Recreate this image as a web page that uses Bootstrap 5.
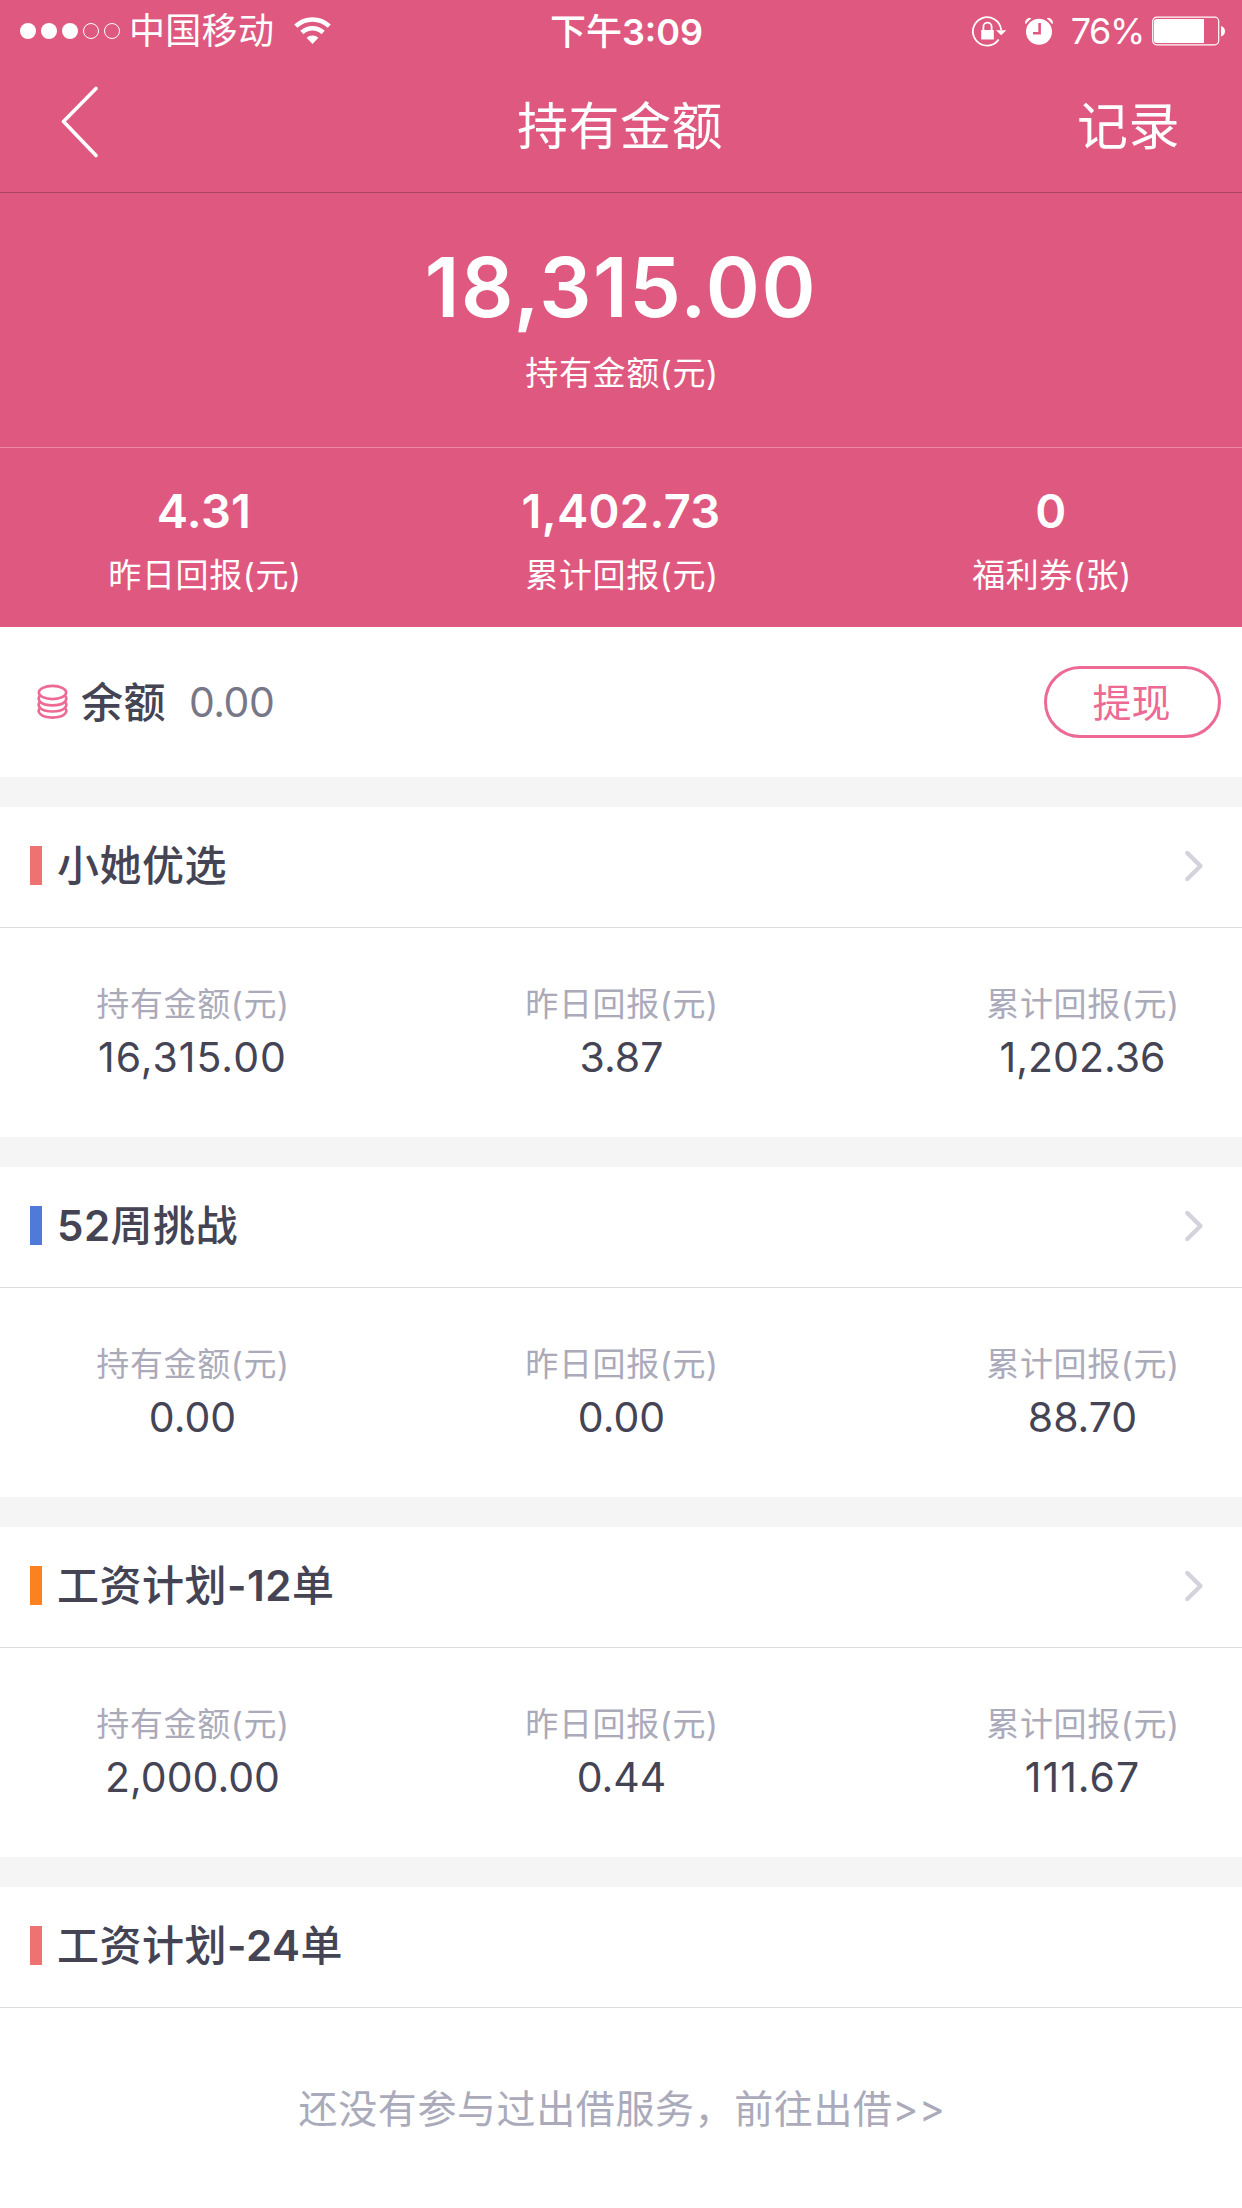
<!DOCTYPE html>
<html lang="zh-CN">
<head>
<meta charset="utf-8">
<meta name="viewport" content="width=device-width, initial-scale=1">
<title>持有金额</title>
<link href="https://cdn.jsdelivr.net/npm/bootstrap@5.3.0/dist/css/bootstrap.min.css" rel="stylesheet">
<style>
  :root { --pink: #df5880; --pink-line: #ec6a93; --ink: #444455; --muted: #aaaabb; }
  body { font-family: Inter, "Noto Sans CJK SC", sans-serif; color: var(--ink); background: #fff; font-size: 33px; line-height: 1; overflow-x: hidden; }
  svg { display: block; flex: none; }
  .top-area { background: var(--pink); color: #fff; height: 627px; }
  .status-bar { height: 60px; font-size: 36px; padding: 1px 16px 0 20px; }
  .status-side { flex: 1 1 0; }
  .status-side span { padding-top: 1px; }
  .carrier { margin-left: 8px; letter-spacing: .3px; }
  .wifi-icon { margin-left: 20px; }
  .clock { font-weight: 500; padding: 2px 0 0 7px; }
  .percent { letter-spacing: -1.4px; }
  .title-bar { height: 133px; font-size: 51px; padding: 0 62px 0 60px; border-bottom: 1px solid #a94567; }
  .title-side { flex: 1 1 0; }
  .title-side svg { margin-bottom: 8px; }
  .title-bar span { letter-spacing: .5px; padding-top: 1px; }
  .hero { height: 255px; padding-top: 50px; border-bottom: 1px solid #ea88a6; }
  .hero-sum { font-size: 82px; font-weight: 600; line-height: 90px; letter-spacing: 1.6px; }
  .cap-text { line-height: 46px; letter-spacing: .6px; padding-left: 2px; }
  .hero .cap-text { margin-top: 17px; }
  .stats { padding-top: 35px; }
  .stat-first { width: 408px; }
  .stat-last { width: 408px; padding-left: 26px; }
  .stat-num { font-size: 47px; font-weight: 600; line-height: 56px; letter-spacing: .3px; }
  .stats .cap-text { margin-top: 13px; }
  .balance { height: 150px; padding: 0 21px 0 37px; }
  .heading { font-size: 42px; font-weight: 500; letter-spacing: .5px; }
  .balance .heading { margin-left: 12px; padding-top: 2px; }
  .balance-num { font-size: 41px; letter-spacing: -.5px; color: #777788; margin-left: 23px; padding-top: 1px; }
  .withdraw { width: 177px; height: 72px; border: 3px solid var(--pink-line); color: var(--pink-line); font-size: 39px; line-height: 1; padding: 0 2px 0 0; }
  .plan { height: 360px; border-top: 30px solid #f5f5f5; }
  .plan-head { height: 121px; padding: 0 38px 3px 30px; border-bottom: 1px solid #dcdcdc; }
  .tick { width: 12px; height: 39px; margin-right: 15px; }
  .tick-red { background: #ee7272; }
  .tick-blue { background: #4f7ada; }
  .tick-orange { background: #fb821e; }
  .figures { padding-top: 53px; }
  .figures .cap-text { color: var(--muted); }
  .fig-first { width: 384px; }
  .fig-last { width: 384px; padding-left: 64px; }
  .fig-num { font-size: 41px; line-height: 50px; margin-top: 5px; padding-left: 1px; }
  .fig-spread { letter-spacing: 1px; }
  .empty-note { font-size: 39px; line-height: 50px; letter-spacing: .6px; color: var(--muted); padding: 76px 0 0 2px; }
</style>
</head>
<body>
<header class="top-area">
  <div class="status-bar d-flex align-items-center">
    <div class="status-side d-flex align-items-center">
      <svg width="101" height="18" viewBox="0 0 101 18"><g fill="#fff"><circle cx="8" cy="9" r="8"/><circle cx="29" cy="9" r="8"/><circle cx="50" cy="9" r="8"/></g><g fill="none" stroke="#fff" stroke-width="1"><circle cx="71" cy="9" r="7.5"/><circle cx="92" cy="9" r="7.5"/></g></svg>
      <span class="carrier">中国移动</span>
      <svg class="wifi-icon" width="37" height="28" viewBox="0 0 37 28"><g fill="none" stroke="#fff" stroke-width="4.6"><path d="M1.8 9.2a24 24 0 0 1 33.4 0"/><path d="M7.9 15.5a15.2 15.2 0 0 1 21.2 0"/></g><path d="M12.6 20.8a8.6 8.6 0 0 1 11.8 0L18.5 27z" fill="#fff"/></svg>
    </div>
    <div class="clock">下午<span class="fw-semibold">3:09</span></div>
    <div class="status-side d-flex align-items-center justify-content-end">
      <svg width="35" height="32" viewBox="0 0 35 32"><path d="M26.7 24.6A14.2 14.2 0 1 1 29.2 15" fill="none" stroke="#fff" stroke-width="1.8"/><path d="M24 15.3h10.3l-5.1 5z" fill="#fff"/><path d="M9.2 15h12.6v9.5H9.2z" fill="#fff"/><path d="M11.4 15.5v-3.7a4.1 4.1 0 0 1 8.2 0v3.700" fill="none" stroke="#fff" stroke-width="1.8"/></svg>
      <svg class="ms-3 me-3" width="32" height="30" viewBox="0 0 32 30"><circle cx="16" cy="15.8" r="13" fill="#fff"/><path d="M2.8 7.800A4.100 4.100 0 0 1 8 2.600M29.200 7.800A4.100 4.100 0 0 0 24 2.600" fill="#fff" stroke="#fff" stroke-width="1"/><path d="M16.600 7v10.200H10" fill="none" stroke="#df5880" stroke-width="2.600"/></svg>
      <span class="percent">76%</span>
      <svg class="ms-2" width="74" height="30" viewBox="0 0 74 30"><rect x=".7" y="1.2" width="66" height="27.6" rx="4" fill="none" stroke="#fff" stroke-width="1.2"/><path d="M4.5 3H52v24H4.500A2.500 2.500 0 0 1 2 24.500V5.500A2.500 2.500 0 0 1 4.500 3z" fill="#fff"/><path d="M69 10c5.300 1.500 5.300 9 0 10.500z" fill="#fff"/></svg>
    </div>
  </div>
  <nav class="title-bar d-flex align-items-center">
    <div class="title-side"><svg width="38" height="72" viewBox="0 0 38 72"><path d="M36 2.500 3.500 35.500 36 69.500" fill="none" stroke="#fff" stroke-width="3.600" stroke-linecap="round" stroke-linejoin="round"/></svg></div>
    <span>持有金额</span>
    <div class="title-side text-end"><span>记录</span></div>
  </nav>
  <section class="hero text-center">
    <div class="hero-sum">18,315.00</div>
    <div class="cap-text">持有金额(元)</div>
  </section>
  <section class="stats d-flex text-center">
    <div class="stat-first"><div class="stat-num">4.31</div><div class="cap-text">昨日回报(元)</div></div>
    <div class="flex-fill"><div class="stat-num">1,402.73</div><div class="cap-text">累计回报(元)</div></div>
    <div class="stat-last"><div class="stat-num">0</div><div class="cap-text">福利券(张)</div></div>
  </section>
</header>
<main>
  <section class="balance d-flex align-items-center">
    <svg width="32" height="36" viewBox="0 0 32 36"><g fill="none" stroke="#ec6a93" stroke-width="2.600"><ellipse cx="15.500" cy="8.500" rx="13.700" ry="6.600"/><path id="coin" d="M2.700 12C-.5 16.500 4.500 21.400 15.500 21.400S31.500 16.500 28.300 12"/><use href="#coin" y="6.100"/><use href="#coin" y="12.200"/></g></svg>
    <span class="heading">余额</span>
    <span class="balance-num">0.00</span>
    <button class="withdraw btn rounded-pill ms-auto" type="button">提现</button>
  </section>
  <section class="plan">
    <div class="plan-head d-flex align-items-center"><i class="tick tick-red"></i><span class="heading">小她优选</span>
      <svg class="ms-auto" width="20" height="34" viewBox="0 0 20 34"><path d="M3.300 4 16.500 17 3.300 30" fill="none" stroke="#d3d3dc" stroke-width="4.400" stroke-linecap="round" stroke-linejoin="round"/></svg></div>
    <div class="figures d-flex text-center">
      <div class="fig-first"><div class="cap-text">持有金额(元)</div><div class="fig-num fig-spread">16,315.00</div></div>
      <div class="flex-fill"><div class="cap-text">昨日回报(元)</div><div class="fig-num">3.87</div></div>
      <div class="fig-last"><div class="cap-text">累计回报(元)</div><div class="fig-num">1,202.36</div></div>
    </div>
  </section>
  <section class="plan">
    <div class="plan-head d-flex align-items-center"><i class="tick tick-blue"></i><span class="heading"><span class="fw-semibold">52</span>周挑战</span>
      <svg class="ms-auto" width="20" height="34" viewBox="0 0 20 34"><path d="M3.300 4 16.500 17 3.300 30" fill="none" stroke="#d3d3dc" stroke-width="4.400" stroke-linecap="round" stroke-linejoin="round"/></svg></div>
    <div class="figures d-flex text-center">
      <div class="fig-first"><div class="cap-text">持有金额(元)</div><div class="fig-num">0.00</div></div>
      <div class="flex-fill"><div class="cap-text">昨日回报(元)</div><div class="fig-num">0.00</div></div>
      <div class="fig-last"><div class="cap-text">累计回报(元)</div><div class="fig-num">88.70</div></div>
    </div>
  </section>
  <section class="plan">
    <div class="plan-head d-flex align-items-center"><i class="tick tick-orange"></i><span class="heading">工资计划<span class="fw-semibold">-12</span>单</span>
      <svg class="ms-auto" width="20" height="34" viewBox="0 0 20 34"><path d="M3.300 4 16.500 17 3.300 30" fill="none" stroke="#d3d3dc" stroke-width="4.400" stroke-linecap="round" stroke-linejoin="round"/></svg></div>
    <div class="figures d-flex text-center">
      <div class="fig-first"><div class="cap-text">持有金额(元)</div><div class="fig-num">2,000.00</div></div>
      <div class="flex-fill"><div class="cap-text">昨日回报(元)</div><div class="fig-num">0.44</div></div>
      <div class="fig-last"><div class="cap-text">累计回报(元)</div><div class="fig-num fig-spread">111.67</div></div>
    </div>
  </section>
  <section class="plan">
    <div class="plan-head d-flex align-items-center"><i class="tick tick-red"></i><span class="heading">工资计划<span class="fw-semibold">-24</span>单</span></div>
    <div class="empty-note text-center">还没有参与过出借服务，前往出借&gt;&gt;</div>
  </section>
</main>
<script src="https://cdn.jsdelivr.net/npm/bootstrap@5.3.0/dist/js/bootstrap.bundle.min.js"></script>
</body>
</html>
